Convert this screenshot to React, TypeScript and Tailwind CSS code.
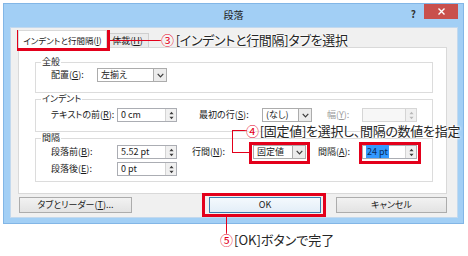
import React from 'react';

const Chevron = () => (
  <svg width="7" height="5" viewBox="0 0 7 5">
    <path d="M0.7 0.8 L3.5 3.8 L6.3 0.8" fill="none" stroke="#3c3c3c" strokeWidth="1.2" />
  </svg>
);

const SpinArrows = ({ dim }: { dim?: boolean }) => (
  <svg width="5" height="9" viewBox="0 0 5 9">
    <path d="M2.5 0.8 L4.6 3.2 L0.4 3.2 Z M0.4 5.8 L4.6 5.8 L2.5 8.2 Z" fill={dim ? '#b8b8b8' : '#3c3c3c'} />
  </svg>
);

function Select({ value, className }: { value: string; className: string }) {
  return (
    <div className={`flex h-[14px] border border-[#acacac] bg-white ${className}`}>
      <span className="flex-1 whitespace-nowrap pl-[3px] leading-[12px]">{value}</span>
      <span className="flex w-[13px] items-center justify-center border-l border-[#acacac] bg-[#ececec]">
        <Chevron />
      </span>
    </div>
  );
}

function Spin({
  value,
  className,
  disabled,
  selected,
}: {
  value: string;
  className: string;
  disabled?: boolean;
  selected?: boolean;
}) {
  return (
    <div
      className={`flex h-[14px] border ${disabled ? 'border-[#d6d6d6] bg-[#f7f7f7]' : 'border-[#abadb3] bg-white'} ${className}`}
    >
      <span className="flex-1 whitespace-nowrap pl-[3px] leading-[12px]">
        {selected ? <span className="bg-[#3399ff] px-[1px] text-[#0b2c5c]">{value}</span> : value}
      </span>
      <span className="flex w-[11px] items-center justify-center border-l border-[#d4d4d4] bg-[#f0f0f0]">
        <SpinArrows dim={disabled} />
      </span>
    </div>
  );
}

function Group({ title, className, children }: { title: string; className: string; children: React.ReactNode }) {
  return (
    <div className={`relative ml-[16px] w-[398px] border border-[#dcdcdc] ${className}`}>
      <span className="absolute -top-[7px] left-[5px] bg-white px-[1px] leading-[12px]">{title}</span>
      {children}
    </div>
  );
}

function Box({ className }: { className: string }) {
  return <div className={`absolute border-[3px] border-[#e3001b] ${className}`} />;
}

const halo = '[text-shadow:0_0_2px_#fff,0_0_2px_#fff,0_0_3px_#fff]';

export default function App() {
  return (
    <div className="relative h-[256px] w-[468px] overflow-hidden bg-white font-['Noto_Sans_CJK_JP','Noto_Sans',sans-serif] text-[9px] text-[#1a1a1a] [font-feature-settings:'palt']">
      {/* window */}
      <div className="ml-[3px] mt-[3px] flex h-[221px] w-[461px] flex-col border border-[#82b6e6] bg-[#a2cff5]">
        <div className="grid h-[23px] grid-cols-[1fr_auto_1fr] items-start">
          <div />
          <div className="pt-[4px] text-[10px] leading-[14px] text-[#222]">段落</div>
          <div className="flex items-start justify-end">
            <span className="mr-[8px] mt-[3px] text-[10px] font-bold leading-[14px] text-[#333]">?</span>
            <span className="mr-[5px] flex h-[15px] w-[34px] items-center justify-center bg-[#c9504c]">
              <svg width="7" height="7" viewBox="0 0 7 7">
                <path d="M0.5 0.5 L6.5 6.5 M6.5 0.5 L0.5 6.5" stroke="#fff" strokeWidth="1.4" />
              </svg>
            </span>
          </div>
        </div>

        <div className="mb-[5px] ml-[6px] mr-[5px] flex flex-1 flex-col bg-[#f0f0f0] shadow-[inset_0_0_0_1px_#c3d9ee]">
          {/* tabs */}
          <div className="flex h-[21px] items-end pl-[8px]">
            <div className="relative z-10 flex h-[18px] w-[89px] items-center justify-center border border-b-0 border-[#d9d9d9] bg-white text-[8.5px] leading-[12px]">
              インデントと行間隔(<u>I</u>)
            </div>
            <div className="flex h-[15px] w-[42px] items-center justify-center border border-b-0 border-l-0 border-[#cfcfcf] bg-[#ebebeb] leading-[12px]">
              体裁(<u>H</u>)
            </div>
          </div>

          {/* panel */}
          <div className="-mt-[1px] ml-[8px] h-[147px] w-[429px] border border-[#d9d9d9] bg-white">
            <Group title="全般" className="mt-[14px] h-[31px]">
              <div className="flex items-center pl-[15px] pt-[5px]">
                <span className="w-[46px] shrink-0 leading-[12px]">配置(<u>G</u>):</span>
                <Select value="左揃え" className="w-[70px]" />
              </div>
            </Group>

            <Group title="インデント" className="mt-[6px] h-[33px]">
              <div className="flex items-center pl-[15px] pt-[8px]">
                <span className="w-[66px] shrink-0 leading-[12px]">テキストの前(<u>R</u>):</span>
                <Spin value="0 cm" className="w-[60px]" />
                <span className="ml-[22px] w-[63px] shrink-0 leading-[12px]">最初の行(<u>S</u>):</span>
                <Select value="(なし)" className="w-[50px]" />
                <span className="ml-[15px] w-[35px] shrink-0 leading-[12px] text-[#9a9a9a]">幅(<u>Y</u>):</span>
                <Spin value="" className="w-[55px]" disabled />
              </div>
            </Group>

            <Group title="間隔" className="mt-[6px] h-[44px]">
              <div className="flex items-center pl-[15px] pt-[6px]">
                <span className="w-[66px] shrink-0 leading-[12px]">段落前(<u>B</u>):</span>
                <Spin value="5.52 pt" className="w-[60px]" />
                <span className="ml-[15px] w-[61px] shrink-0 leading-[12px]">行間(<u>N</u>):</span>
                <Select value="固定値" className="w-[53px]" />
                <span className="ml-[12px] w-[44px] shrink-0 leading-[12px]">間隔(<u>A</u>):</span>
                <Spin value="24 pt" className="w-[55px]" selected />
              </div>
              <div className="mt-[3px] flex items-center pl-[15px]">
                <span className="w-[66px] shrink-0 leading-[12px]">段落後(<u>E</u>):</span>
                <Spin value="0 pt" className="w-[60px]" />
              </div>
            </Group>
          </div>

          {/* buttons */}
          <div className="mt-[3px] flex h-[16px] pl-[9px]">
            <button className="w-[113px] border border-[#acacac] bg-gradient-to-b from-[#f2f2f2] to-[#e3e3e3] leading-[12px]">
              タブとリーダー(<u>T</u>)...
            </button>
            <button className="ml-[77px] w-[112px] border border-[#3c7fb1] bg-gradient-to-b from-[#f4f9fd] to-[#e3eef8] leading-[12px]">
              OK
            </button>
            <button className="ml-[15px] w-[111px] border border-[#acacac] bg-gradient-to-b from-[#f2f2f2] to-[#e3e3e3] leading-[12px]">
              キャンセル
            </button>
          </div>
        </div>
      </div>

      {/* annotations */}
      <Box className="left-[17px] top-[30px] h-[21px] w-[93px]" />
      <Box className="left-[249px] top-[142px] h-[22px] w-[61px]" />
      <Box className="left-[359px] top-[142px] h-[22px] w-[62px]" />
      <Box className="left-[202px] top-[193px] h-[24px] w-[124px]" />

      <div className="absolute left-[110px] top-[40px] h-px w-[51px] bg-[#e3001b]" />
      <div className="absolute left-[232px] top-[130px] h-px w-[15px] bg-[#e3001b]" />
      <div className="absolute left-[232px] top-[130px] h-[23px] w-px bg-[#e3001b]" />
      <div className="absolute left-[232px] top-[152px] h-px w-[17px] bg-[#e3001b]" />
      <div className="absolute left-[226px] top-[217px] h-[17px] w-px bg-[#e3001b]" />

      <div className={`absolute left-[161px] top-[32px] flex h-[16px] items-center text-[13px] leading-[16px] tracking-[-0.3px] text-[#262626] ${halo}`}>
        <span className="mr-[2px] text-[#e3001b]">③</span>[インデントと行間隔]タブを選択
      </div>
      <div className={`absolute left-[246px] top-[124px] flex h-[13px] items-center text-[13px] leading-[13px] tracking-[-0.3px] text-[#262626] ${halo}`}>
        <span className="mr-[1px] text-[#e3001b]">④</span>[固定値]を選択し、間隔の数値を指定
      </div>
      <div className={`absolute left-[220px] top-[232px] flex h-[16px] items-center text-[13px] leading-[16px] text-[#262626] ${halo}`}>
        <span className="mr-[1px] text-[#e3001b]">⑤</span>[OK]ボタンで完了
      </div>
    </div>
  );
}
